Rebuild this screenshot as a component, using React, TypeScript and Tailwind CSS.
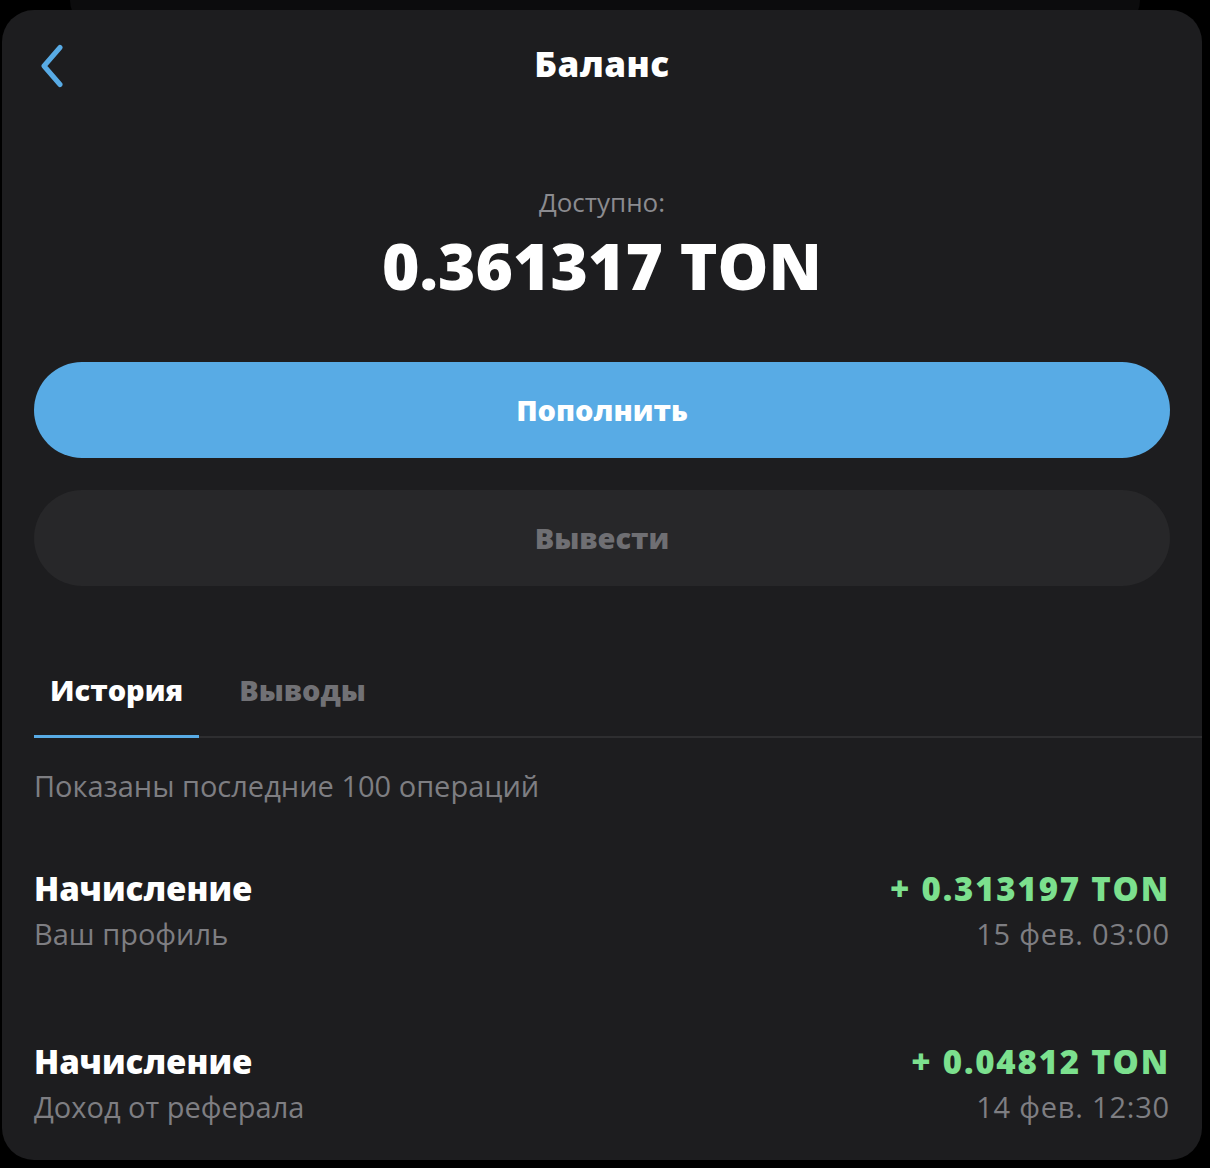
import React, { useState } from "react";

const ops = [
  { title: "Начисление", sub: "Ваш профиль", amount: "+ 0.313197 TON", date: "15 фев. 03:00" },
  { title: "Начисление", sub: "Доход от реферала", amount: "+ 0.04812 TON", date: "14 фев. 12:30" },
];

const App = () => {
  const [tab, setTab] = useState("history");

  return (
    <div className="w-[1210px] h-[1168px] bg-black overflow-hidden relative font-['Open_Sans',sans-serif]">
      {/* stacked sheet behind */}
      <div className="absolute left-[70px] right-[70px] -top-[30px] h-[60px] rounded-[34px] bg-[#0c0c0d]" />

      {/* Main sheet */}
      <div className="relative mt-[10px] ml-[2px] w-[1200px] h-[1150px] rounded-[32px] bg-[#1d1d1f] px-8 flex flex-col">
        {/* Header */}
        <div className="h-[110px] flex items-center justify-center relative">
          <button className="absolute left-[1px] top-[34px] w-[32px] h-[44px] flex items-center justify-center">
            <svg width="26" height="44" viewBox="0 0 26 44" fill="none">
              <path d="M22 3.5 L6 22 L22 40.5" stroke="#58abe5" strokeWidth="5" strokeLinecap="round" strokeLinejoin="round" />
            </svg>
          </button>
          <h1 className="text-[35px] font-extrabold text-white -mt-[2px] tracking-[0.5px]">Баланс</h1>
        </div>

        {/* Balance */}
        <div className="flex flex-col items-center mt-[64px]">
          <p className="text-[26px] text-[#8b8b8f] leading-[36px]">Доступно:</p>
          <p className="text-[64px] font-extrabold text-white leading-[80px] mt-[6px]">0.361317 TON</p>
        </div>

        {/* Buttons */}
        <div className="flex flex-col gap-8 mt-[56px]">
          <button className="h-[96px] rounded-full bg-[#58abe5] text-white text-[29px] font-extrabold">Пополнить</button>
          <button className="h-[96px] rounded-full bg-[#272729] text-[#6f6f73] text-[29px] font-extrabold">Вывести</button>
        </div>

        {/* Tabs */}
        <div className="flex mt-[84px] border-b-2 border-[#2e2e30] -mr-8">
          <button
            onClick={() => setTab("history")}
            className={`px-4 pb-[25px] text-[29px] font-extrabold leading-[40px] -mb-[2px] border-b-[3px] ${tab === "history" ? "text-white border-[#58abe5]" : "text-[#717175] border-transparent"}`}
          >
            История
          </button>
          <button
            onClick={() => setTab("withdrawals")}
            className={`px-[40px] pb-[25px] text-[29px] font-extrabold leading-[40px] -mb-[2px] border-b-[3px] ${tab === "withdrawals" ? "text-white border-[#58abe5]" : "text-[#717175] border-transparent"}`}
          >
            Выводы
          </button>
        </div>

        <p className="text-[29px] text-[#7e7e82] mt-[28px] leading-[40px]">Показаны последние 100 операций</p>

        {/* Operations */}
        <div className="flex flex-col gap-[83px] mt-[60px]">
          {ops.map((op, i) => (
            <div key={i} className="flex justify-between">
              <div className="flex flex-col">
                <span className="text-[33px] font-extrabold text-white leading-[45px]">{op.title}</span>
                <span className="text-[29px] text-[#7e7e82] leading-[45px]">{op.sub}</span>
              </div>
              <div className="flex flex-col items-end">
                <span className="text-[33px] font-extrabold text-[#7ce08e] leading-[45px] tracking-[1.8px]">{op.amount}</span>
                <span className="text-[29px] text-[#7e7e82] leading-[45px] tracking-[0.8px]">{op.date}</span>
              </div>
            </div>
          ))}
        </div>
      </div>
    </div>
  );
};

export default App;
